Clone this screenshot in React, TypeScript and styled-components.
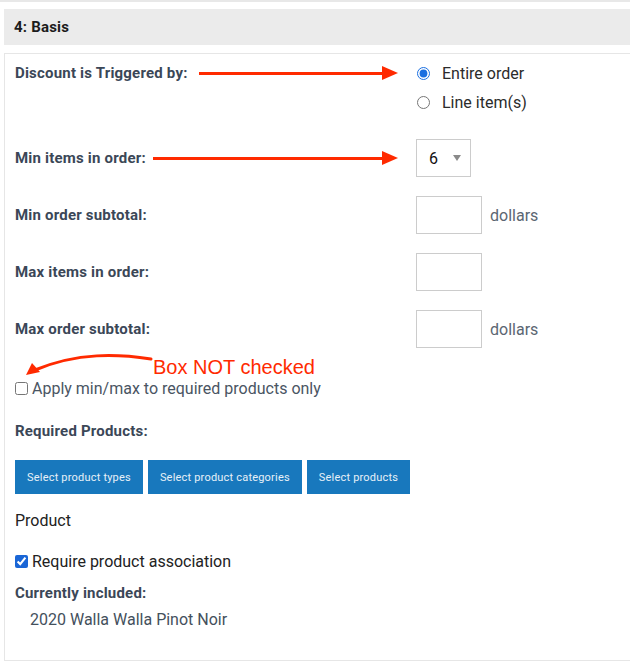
import styled, { createGlobalStyle } from 'styled-components'

const GlobalStyle = createGlobalStyle`
  html, body {
    margin: 0;
    padding: 0;
    background: #fff;
    overflow-x: hidden;
  }
  body {
    font-family: Roboto, "Liberation Sans", Arial, sans-serif;
  }
`

const Page = styled.div`
  border-top: 2px solid #e8e8e8;
  padding: 7px 0 0 4px;
  width: 640px;
`

const SectionHeader = styled.div`
  background: #ebebeb;
  height: 36px;
  display: flex;
  align-items: center;
  padding-left: 10px;
  font-size: 15px;
  font-weight: 700;
  letter-spacing: 0.2px;
  color: #1c1c1c;
`

const Panel = styled.div`
  margin-top: 8px;
  border: 1px solid #e6e6e6;
  padding: 8px 0 30px 10px;
  display: flex;
  flex-direction: column;
`

const FieldRow = styled.div<{ $top?: number; $align?: string }>`
  display: grid;
  grid-template-columns: 401px auto;
  align-items: ${p => p.$align || 'center'};
  margin-top: ${p => p.$top ?? 19}px;
`

const LabelCell = styled.div`
  display: flex;
  align-items: center;
  height: 22px;
  padding-right: 18px;
`

const Label = styled.span`
  font-size: 15px;
  font-weight: 700;
  letter-spacing: 0.2px;
  color: #3b4757;
  white-space: nowrap;
`

const ArrowLine = styled.div<{ $gap: number }>`
  flex: 1;
  display: flex;
  align-items: center;
  margin-left: ${p => p.$gap}px;
`

const Shaft = styled.div`
  flex: 1;
  height: 3px;
  background: #ff2a00;
`

const RadioGroup = styled.div`
  display: flex;
  flex-direction: column;
  gap: 7px;
`

const Choice = styled.label`
  display: flex;
  align-items: center;
  height: 22px;
  font-size: 16px;
  color: #2b2b2b;

  input {
    margin: 0 12px 0 1px;
    width: 13px;
    height: 13px;
    accent-color: #1a6fe0;
  }
`

const SelectBox = styled.div`
  width: 55px;
  height: 38px;
  box-sizing: border-box;
  border: 1px solid #cccccc;
  display: flex;
  align-items: center;
  justify-content: space-between;
  padding: 0 9px 0 12px;
  font-size: 16px;
  color: #111;
`

const Caret = styled.span`
  width: 0;
  height: 0;
  border-left: 4px solid transparent;
  border-right: 4px solid transparent;
  border-top: 6px solid #8a8a8a;
`

const Control = styled.div`
  display: flex;
  align-items: center;
  gap: 8px;
`

const TextBox = styled.input`
  width: 66px;
  height: 38px;
  box-sizing: border-box;
  border: 1px solid #cccccc;
  margin: 0;
  padding: 0 6px;
`

const Unit = styled.span`
  font-size: 16px;
  color: #5b6672;
`

const Annotation = styled.div`
  display: flex;
  align-items: flex-end;
  height: 28px;
  margin-top: 2px;
  margin-left: 8px;
`

const AnnotationText = styled.span`
  font-family: "Liberation Sans", Arial, sans-serif;
  font-size: 20px;
  color: #ff2a00;
  line-height: 22px;
  margin-left: 0;
`

const CheckRow = styled.label<{ $top: number; $color?: string }>`
  display: flex;
  align-items: center;
  height: 20px;
  margin-top: ${p => p.$top}px;
  font-size: 16px;
  color: ${p => p.$color || '#222'};

  input {
    margin: 0 4px 0 0;
    width: 13px;
    height: 13px;
    accent-color: #1a66d6;
  }
`

const SubHeading = styled.div<{ $top: number }>`
  height: 20px;
  line-height: 20px;
  margin-top: ${p => p.$top}px;
  font-size: 15px;
  font-weight: 700;
  letter-spacing: 0.2px;
  color: #3b4757;
`

const ButtonBar = styled.div`
  display: flex;
  gap: 5px;
  margin-top: 19px;
`

const BlueButton = styled.button`
  height: 34px;
  padding: 0 12px;
  border: none;
  background: #1878bd;
  color: #e6f0f8;
  font-family: Roboto, "Liberation Sans", Arial, sans-serif;
  font-size: 11px;
  letter-spacing: 0.2px;
  cursor: pointer;
`

const PlainText = styled.div<{ $top: number; $indent?: number; $color?: string }>`
  height: 20px;
  line-height: 20px;
  margin-top: ${p => p.$top}px;
  padding-left: ${p => p.$indent || 0}px;
  font-size: 16px;
  color: ${p => p.$color || '#222'};
`

function ArrowHead() {
  return (
    <svg width="16" height="14" viewBox="0 0 16 14">
      <polygon points="0,0 16,7 0,14" fill="#ff2a00" />
    </svg>
  )
}

function CurvedArrow() {
  return (
    <svg width="130" height="28" viewBox="0 0 130 28">
      <path d="M128 9 C 95 4, 55 2, 12 20" stroke="#ff2a00" strokeWidth="3" fill="none" strokeLinecap="round" />
      <polygon points="3,25 9,13 17,22" fill="#ff2a00" />
    </svg>
  )
}

export default function App() {
  return (
    <>
      <GlobalStyle />
      <Page>
        <SectionHeader>4: Basis</SectionHeader>
        <Panel>
          <FieldRow $top={0} $align="start">
            <LabelCell>
              <Label>Discount is Triggered by:</Label>
              <ArrowLine $gap={11}>
                <Shaft />
                <ArrowHead />
              </ArrowLine>
            </LabelCell>
            <RadioGroup>
              <Choice>
                <input type="radio" name="trigger" defaultChecked />
                Entire order
              </Choice>
              <Choice>
                <input type="radio" name="trigger" />
                Line item(s)
              </Choice>
            </RadioGroup>
          </FieldRow>

          <FieldRow $top={26}>
            <LabelCell>
              <Label>Min items in order:</Label>
              <ArrowLine $gap={7}>
                <Shaft />
                <ArrowHead />
              </ArrowLine>
            </LabelCell>
            <SelectBox>
              6
              <Caret />
            </SelectBox>
          </FieldRow>

          <FieldRow>
            <LabelCell>
              <Label>Min order subtotal:</Label>
            </LabelCell>
            <Control>
              <TextBox type="text" />
              <Unit>dollars</Unit>
            </Control>
          </FieldRow>

          <FieldRow>
            <LabelCell>
              <Label>Max items in order:</Label>
            </LabelCell>
            <Control>
              <TextBox type="text" />
            </Control>
          </FieldRow>

          <FieldRow>
            <LabelCell>
              <Label>Max order subtotal:</Label>
            </LabelCell>
            <Control>
              <TextBox type="text" />
              <Unit>dollars</Unit>
            </Control>
          </FieldRow>

          <Annotation>
            <CurvedArrow />
            <AnnotationText>Box NOT checked</AnnotationText>
          </Annotation>

          <CheckRow $top={0} $color="#4a5563">
            <input type="checkbox" />
            Apply min/max to required products only
          </CheckRow>

          <SubHeading $top={23}>Required Products:</SubHeading>

          <ButtonBar>
            <BlueButton>Select product types</BlueButton>
            <BlueButton>Select product categories</BlueButton>
            <BlueButton>Select products</BlueButton>
          </ButtonBar>

          <PlainText $top={17}>Product</PlainText>

          <CheckRow $top={20}>
            <input type="checkbox" defaultChecked />
            Require product association
          </CheckRow>

          <SubHeading $top={12}>Currently included:</SubHeading>
          <PlainText $top={7} $indent={15} $color="#44505c">2020 Walla Walla Pinot Noir</PlainText>
        </Panel>
      </Page>
    </>
  )
}
